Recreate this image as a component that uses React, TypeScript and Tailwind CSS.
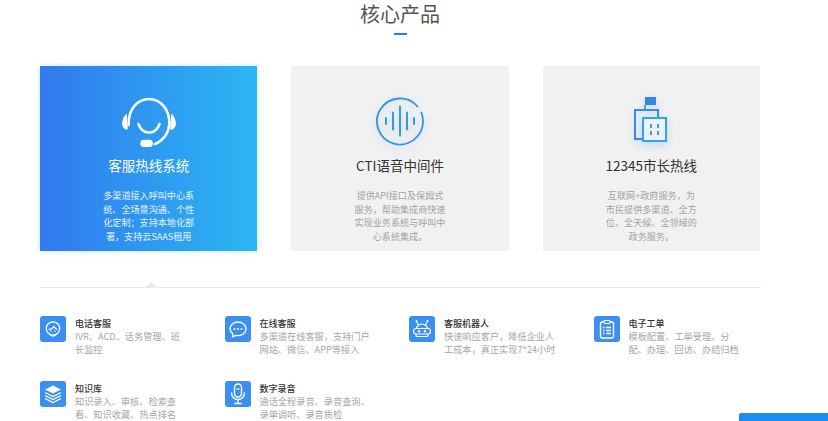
import { ReactNode } from "react";

const FONT = "font-['Noto_Sans_CJK_SC','Noto_Sans',sans-serif]";

function HeadsetIcon() {
  return (
    <svg width="58" height="52" viewBox="0 0 60 54" fill="none">
      <path d="M9 30C8 14 18 3 30 3s22 11 21 27c-1 9-6 16-15 20" stroke="#fff" strokeWidth="2.6" strokeLinecap="round" />
      <path d="M6 19c-3 3-4 8-4 10 0 3 3 6 5 6l1-1-1-15z" fill="#fff" />
      <path d="M54 19c3 3 4 8 4 10 0 3-3 6-5 6l-1-1 1-15z" fill="#fff" />
      <path d="M19 29c2 6 6 9 11 9s9-3 11-9" stroke="#fff" strokeWidth="2.6" strokeLinecap="round" />
      <rect x="21" y="45.500" width="13" height="7.500" rx="3.700" fill="#fff" />
    </svg>
  );
}

function WaveIcon() {
  return (
    <svg width="50" height="50" viewBox="0 0 50 50" fill="none" className="drop-shadow-[0_3px_5px_rgba(60,140,240,0.25)]">
      <path d="M42.500 10.500A23 23 0 1 0 48 25c0-3-.6-5.800-1.600-8.300" stroke="#2f93f0" strokeWidth="1.800" strokeLinecap="round" />
      <g stroke="#2f9bf0" strokeWidth="2" strokeLinecap="round">
        <path d="M11 22v6" />
        <path d="M18 16.500v17" />
        <path d="M25 10.500v29" />
        <path d="M32 16.500v17" />
        <path d="M39 22v6" />
      </g>
    </svg>
  );
}

function BuildingIcon() {
  return (
    <svg width="36" height="48" viewBox="0 0 36 48" fill="none" className="drop-shadow-[0_3px_5px_rgba(60,140,240,0.25)]">
      <rect x="12" y="1" width="11" height="8" fill="#2f86ec" />
      <path d="M12 9v5" stroke="#2f86ec" strokeWidth="1.500" />
      <path d="M10 43H2V14h23v7" stroke="#2f8ff0" strokeWidth="2" />
      <rect x="10" y="22" width="23" height="23" fill="#eef1f5" stroke="#2ea5f2" strokeWidth="2" />
      <g fill="#2ea5f2">
        <rect x="17" y="28" width="2" height="4" />
        <rect x="24" y="28" width="2" height="4" />
        <rect x="17" y="35" width="2" height="4" />
        <rect x="24" y="35" width="2" height="4" />
      </g>
    </svg>
  );
}

function FaceIcon() {
  return (
    <svg width="18" height="18" viewBox="0 0 18 18" fill="none">
      <circle cx="9" cy="8.500" r="6.700" stroke="#fff" strokeWidth="1.300" />
      <path d="M4.500 9.500C7 9.500 9 8 10 6.500c.8 1.500 2 2.700 3.500 3" stroke="#fff" strokeWidth="1.100" />
      <path d="M5 13.500c1 1.500 2.500 2.500 4 2.500s3-1 4-2.500" stroke="#fff" strokeWidth="1.300" />
      <circle cx="7" cy="11" r=".8" fill="#fff" />
      <circle cx="11" cy="11" r=".8" fill="#fff" />
    </svg>
  );
}

function ChatIcon() {
  return (
    <svg width="18" height="18" viewBox="0 0 18 18" fill="none">
      <path d="M9 2c4.400 0 8 2.900 8 6.800s-3.600 6.800-8 6.800c-.8 0-1.500-.1-2.200-.3L3.500 17l.3-3.200C2 12.500 1 10.800 1 8.800 1 4.900 4.600 2 9 2z" stroke="#fff" strokeWidth="1.400" strokeLinejoin="round" />
      <circle cx="5.500" cy="9" r="1" fill="#fff" />
      <circle cx="9" cy="9" r="1" fill="#fff" />
      <circle cx="12.500" cy="9" r="1" fill="#fff" />
    </svg>
  );
}

function RobotIcon() {
  return (
    <svg width="20" height="20" viewBox="0 0 20 20" fill="none">
      <path d="M6.500 6L4.500 2.500M13.500 6l2-3.500" stroke="#fff" strokeWidth="1.100" />
      <circle cx="4.500" cy="2" r="1" fill="#fff" />
      <circle cx="15.500" cy="2" r="1" fill="#fff" />
      <path d="M4 11a6 6 0 0 1 12 0v5.500a1 1 0 0 1-1 1H5a1 1 0 0 1-1-1z" stroke="#fff" strokeWidth="1.200" />
      <rect x="1.500" y="9.500" width="17" height="5.500" rx="2.700" stroke="#fff" strokeWidth="1.100" fill="#3a8ff0" />
      <circle cx="7" cy="12.200" r="1.200" fill="#fff" />
      <circle cx="13" cy="12.200" r="1.200" fill="#fff" />
    </svg>
  );
}

function ClipboardIcon() {
  return (
    <svg width="18" height="20" viewBox="0 0 18 20" fill="none">
      <path d="M6 3H4a1.500 1.500 0 0 0-1.500 1.500v13A1.500 1.500 0 0 0 4 19h10a1.500 1.500 0 0 0 1.500-1.500v-13A1.500 1.500 0 0 0 14 3h-2" stroke="#fff" strokeWidth="1.400" />
      <rect x="6" y="1.500" width="6" height="3" rx="1" stroke="#fff" strokeWidth="1.200" />
      <path d="M5 8.500h1.500M8 8.500h5M5 11.500h1.500M8 11.500h5M5 14.500h1.500M8 14.500h5" stroke="#fff" strokeWidth="1.300" />
    </svg>
  );
}

function StackIcon() {
  return (
    <svg width="20" height="20" viewBox="0 0 20 20" fill="none">
      <path d="M10 1.500L18 5.500 10 9.500 2 5.500z" fill="#fff" />
      <path d="M2 8.500l8 4 8-4M2 11.500l8 4 8-4M2 14.500l8 4 8-4" stroke="#fff" strokeWidth="1.300" />
    </svg>
  );
}

function MicIcon() {
  return (
    <svg width="18" height="22" viewBox="0 0 18 22" fill="none">
      <rect x="5.500" y="1" width="7" height="13" rx="3.500" stroke="#fff" strokeWidth="1.400" />
      <path d="M7.500 6h3" stroke="#fff" strokeWidth="1.200" />
      <path d="M2.500 10c0 4 3 6.500 6.500 6.500s6.500-2.500 6.500-6.500M9 16.500V20M5.500 20.500h7" stroke="#fff" strokeWidth="1.400" strokeLinecap="round" />
    </svg>
  );
}

const products: { title: string; lines: string; icon: ReactNode; active?: boolean }[] = [
  {
    title: "客服热线系统",
    lines: "多渠道接入呼叫中心系\n统、全场景沟通、个性\n化定制；支持本地化部\n署，支持云SAAS租用",
    icon: <HeadsetIcon />,
    active: true,
  },
  {
    title: "CTI语音中间件",
    lines: "提供API接口及保姆式\n服务，帮助集成商快速\n实现业务系统与呼叫中\n心系统集成。",
    icon: <WaveIcon />,
  },
  {
    title: "12345市长热线",
    lines: "互联网+政府服务，为\n市民提供多渠道、全方\n位、全天候、全领域的\n政务服务。",
    icon: <BuildingIcon />,
  },
];

const features = [
  { title: "电话客服", lines: "IVR、ACD、话务管理、班\n长监控", icon: <FaceIcon /> },
  { title: "在线客服", lines: "多渠道在线客服，支持门户\n网站、微信、APP等接入", icon: <ChatIcon /> },
  { title: "客服机器人", lines: "快速响应客户，降低企业人\n工成本，真正实现7*24小时", icon: <RobotIcon /> },
  { title: "电子工单", lines: "模板配置、工单受理、分\n配、办理、回访、办结归档", icon: <ClipboardIcon /> },
  { title: "知识库", lines: "知识录入、审核、检索查\n看、知识收藏、热点排名", icon: <StackIcon /> },
  { title: "数字录音", lines: "通话全程录音、录音查询、\n录单调听、录音质检", icon: <MicIcon /> },
];

export default function App() {
  return (
    <div className={`relative h-[421px] w-[828px] overflow-hidden bg-white ${FONT}`}>
      <div className="mx-[40px] w-[720px]">
        <h2 className="text-center text-[20px] leading-[28px] font-normal text-[#555555]">核心产品</h2>
        <div className="mx-auto mt-[5px] h-[2px] w-[13px] bg-[#1f7fe0]" />

        <div className="mt-[31px] grid grid-cols-3 gap-[34px]">
          {products.map((p) => (
            <div
              key={p.title}
              className={
                p.active
                  ? "flex h-[185px] flex-col items-center bg-gradient-to-r from-[#3279ee] to-[#2cb6f2] text-white shadow-[0_0_6px_rgba(60,170,250,0.3)]"
                  : "flex h-[185px] flex-col items-center bg-[#f1f1f2]"
              }
            >
              <div className="mt-[30px] flex h-[56px] items-start justify-center">{p.icon}</div>
              <h3 className={`mt-[3px] text-[13.500px] leading-[20px] font-normal ${p.active ? "text-white" : "text-[#333333]"}`}>
                {p.title}
              </h3>
              <p
                className={`mt-[14px] whitespace-pre-line text-center text-[9.100px] leading-[13.700px] ${p.active ? "text-[#e6f4ff]" : "text-[#a3a3a3]"}`}
              >
                {p.lines}
              </p>
            </div>
          ))}
        </div>

        <div className="relative mt-[36px] h-px w-[721px] bg-[#e8e8e8]">
          <div className="absolute bottom-0 left-[105px] h-0 w-0 border-x-[6px] border-b-[6px] border-x-transparent border-b-[#e8e8e8]" />
        </div>

        <div className="mt-[28px] grid grid-cols-[repeat(4,184.500px)] gap-y-[28px]">
          {features.map((f) => (
            <div key={f.title} className="flex h-[37px] gap-[9px]">
              <div className="flex h-[26px] w-[26px] shrink-0 items-center justify-center rounded-[3px] bg-[#3a8ff0]">
                {f.icon}
              </div>
              <div className="min-w-0 pt-px">
                <h4 className="text-[9px] leading-[13px] font-medium text-[#333333]">{f.title}</h4>
                <p className="whitespace-pre-line text-[9.200px] leading-[13px] text-[#a6a6a6]">{f.lines}</p>
              </div>
            </div>
          ))}
        </div>
      </div>
      <div className="absolute right-0 bottom-0 h-[8px] w-[89px] rounded-tl-[2px] bg-[#1c8cf2]" />
    </div>
  );
}
